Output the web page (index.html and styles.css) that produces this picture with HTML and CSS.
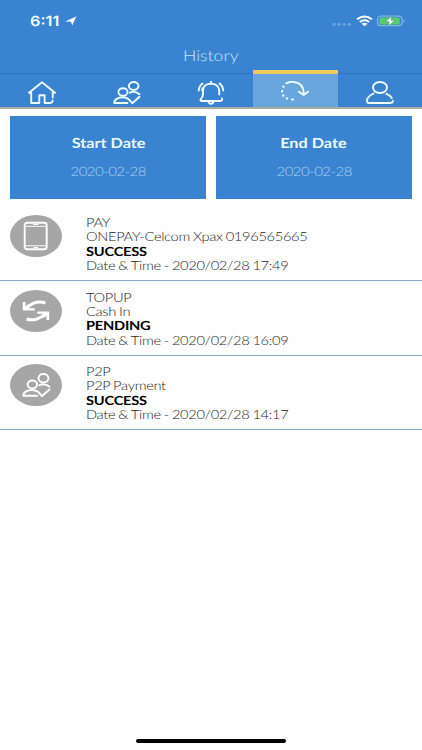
FILE: index.html
```html
<!DOCTYPE html>
<html lang="en">
<head>
<meta charset="utf-8">
<title>History</title>
<link rel="stylesheet" href="styles.css">
</head>
<body>
<svg width="0" height="0" class="defs" aria-hidden="true">
  <symbol id="people" viewBox="0 0 28 24">
    <ellipse cx="20.7" cy="5" rx="4.8" ry="4"/>
    <ellipse cx="10" cy="11" rx="4.6" ry="3.8"/>
    <path d="M14.5 22H1.3C1 18.500 5 16.300 10 16.300Q13 16.300 15.400 18M15.800 18.300L19.300 22.200L26.500 15.800M17 11.700Q21.500 9.400 26.500 13.200"/>
  </symbol>
</svg>
<header class="header">
  <div class="status">
    <span class="time">6:11</span>
    <svg class="location" width="12" height="10" viewBox="0 0 12 10"><path d="M.3 5.400L11.500.3L7.200 9.500L6 5.700Z"/></svg>
    <svg class="signals" width="74" height="14" viewBox="0 0 74 14">
      <g class="dots"><circle cx="3.200" cy="10.300" r="1.600"/><circle cx="8.200" cy="10.300" r="1.600"/><circle cx="13.200" cy="10.300" r="1.600"/><circle cx="18.200" cy="10.300" r="1.600"/></g>
      <path class="wifi" d="M26 5.300Q33.500 -.2 41 5.300M28.800 8Q33.500 4.700 38.200 8"/>
      <path class="white" d="M30.500 9.800Q33.500 7.900 36.500 9.800L33.500 12.200Z"/>
      <rect class="shell" x="46.500" y="2.200" width="24.500" height="9.500" rx="3"/>
      <rect class="charge" x="48.300" y="3.500" width="20.500" height="7" rx="1.500"/>
      <path class="shell" d="M72.600 5.700V8.400"/>
      <path class="bolt" d="M61 1.900L54.300 7.700H58.200L57 12.300L64 6.300H60Z"/>
    </svg>
  </div>
  <h1 class="title"><span class="wide">History</span></h1>
  <nav class="tabs">
    <a class="tab"><svg class="icon" viewBox="0 0 28 24"><path d="M3.200 11.700H1L14 1.200L27 11.700H24.700V16.500M3.200 11.700V22H11.300V14.200H16.600V22H21.500Q24.700 22 24.700 19.500"/></svg></a>
    <a class="tab"><svg class="icon"><use href="#people"/></svg></a>
    <a class="tab"><svg class="icon" viewBox="0 0 28 24"><path d="M22.200 13.500V9.500C22.200 5 18.500 2.800 14 2.800S6 5 6 9.500V13.500Q6 16 3.500 18.400Q3.500 20 5.500 20H23.500Q25.500 20 25 17.500M14 .8V2.800M11.500 20.500Q12 22.800 14 22.800T16.600 20.500M5.500 2.500Q2 5 1.700 9.500M7.300 5.500Q5.500 7 5 9M22.600 2.500Q26 5 26.300 9.500"/></svg></a>
    <a class="tab active"><svg class="icon" viewBox="0 0 28 24"><path d="M5.300 2.300Q10 .2 14 1.200C20 2.200 23 6 22.700 13M17.800 10.700L22.700 14L27 10.700"/><path class="dotted" d="M2.500 5.500L2.400 5.800M1.200 10V10.300M2.200 14.300L2.400 14.600M5.800 17.400L6.100 17.500M11 18.500H12"/></svg></a>
    <a class="tab"><svg class="icon" viewBox="0 0 28 24"><ellipse cx="14" cy="6.500" rx="7" ry="5.500"/><path d="M7.500 12.500C3 14.500 1 17.500 1 20Q1 22 3 22H24Q26.800 22 27 19.800M20.500 12.800Q24.500 14.500 25.800 17"/></svg></a>
  </nav>
</header>
<main>
  <section class="dates">
    <div class="date"><b class="label"><span class="wide">Start Date</span></b><span class="value"><span class="wide">2020-02-28</span></span></div>
    <div class="date"><b class="label"><span class="wide">End Date</span></b><span class="value"><span class="wide">2020-02-28</span></span></div>
  </section>
  <ul class="list">
    <li class="row">
      <div class="badge"><svg width="26" height="30" viewBox="0 0 26 30"><rect x="1.700" y="1.700" width="22" height="26.600" rx="2.500"/><path class="thin" d="M3 5.300H22.500M3 24.800H22.500M10.500 3.500H15M11 26.500H14.500"/></svg></div>
      <div class="details"><p>PAY</p><p>ONEPAY-Celcom Xpax 0196565665</p><p class="state">SUCCESS</p><p>Date &amp; Time - 2020/02/28 17:49</p></div>
    </li>
    <li class="row">
      <div class="badge"><svg width="28" height="22" viewBox="0 0 28 22"><path class="thick" d="M23.500 3C17 .8 10.500 2.500 5.500 7.500M4.500 19C11 21.200 18.500 19 22.700 14"/><path class="heads" d="M.8 2H3.500V6.200L6.500 4L8.300 6L5.800 8.300H12.700V10.500H.8ZM27.200 20H24.500V15.800L21.500 18L19.700 16L22.200 13.700H15.300V11.500H27.200Z"/></svg></div>
      <div class="details"><p>TOPUP</p><p>Cash In</p><p class="state">PENDING</p><p>Date &amp; Time - 2020/02/28 16:09</p></div>
    </li>
    <li class="row">
      <div class="badge"><svg width="29" height="25"><use href="#people"/></svg></div>
      <div class="details"><p>P2P</p><p>P2P Payment</p><p class="state">SUCCESS</p><p>Date &amp; Time - 2020/02/28 14:17</p></div>
    </li>
  </ul>
</main>
<div class="home-bar"></div>
</body>
</html>
```

FILE: styles.css
```css
* { box-sizing: border-box; margin: 0; padding: 0; }
body {
  width: 422px;
  height: 750px;
  display: flex;
  flex-direction: column;
  overflow: hidden;
  background: #fefefe;
  font-family: Lato, sans-serif;
  font-weight: 300;
  text-rendering: geometricPrecision;
}
svg { display: block; fill: none; stroke: #f0fcff; stroke-width: 1.9; stroke-linecap: round; stroke-linejoin: round; }
.defs { position: absolute; }
.wide { display: inline-block; transform: scaleX(1.17); }

.header { height: 109px; flex: none; display: flex; flex-direction: column; background: #3a83d0; border-bottom: 2px solid #a9ada2; }
.status { height: 41px; flex: none; display: flex; align-items: center; padding: 0 17px 0 30px; }
.time { font: 600 14px/16px Inter, sans-serif; color: #f4fcff; transform: scaleX(1.16) translateY(1px); transform-origin: left; width: 35px; }
.location { fill: #f4fcff; stroke: none; }
.signals { margin-left: auto; stroke-linecap: butt; }
.dots { fill: #6aa5e0; stroke: none; }
.wifi { stroke: #fff; stroke-width: 2; }
.white { fill: #fff; stroke: none; }
.shell { stroke: #80b4dd; stroke-width: 1.2; }
.charge { fill: #5acb68; stroke: none; }
.bolt { fill: #fff; stroke: #3f9f86; stroke-width: .7; }
.title { height: 32px; flex: none; text-align: center; font-size: 15.1px; font-weight: 300; line-height: 31px; color: #c3e6f5; }
.tabs { flex: 1; display: grid; grid-template-columns: repeat(5, 1fr); border-top: 1px solid #3274b9; }
.tab { display: flex; justify-content: center; padding-top: 7px; }
.active { margin-top: -4px; border-top: 4px solid #edca5b; background: #68a6dd; }
.icon { width: 28px; height: 24px; }
.dotted { stroke-width: 2.200; }

.dates { display: grid; grid-template-columns: 1fr 1fr; gap: 10px; padding: 7.400px 10.300px 0; }
.date { height: 83px; display: flex; flex-direction: column; align-items: center; gap: 10px; padding-top: 18px; background: #3a83d0; }
.label { font-size: 13.900px; font-weight: 700; line-height: 18px; color: #ecfaff; }
.value { font-size: 12.900px; line-height: 18px; letter-spacing: -.5px; color: #a8d2f2; }

.list { list-style: none; margin-top: 7.300px; }
.row { height: 74.500px; display: flex; gap: 24px; padding: 8.500px 10.300px 0; border-bottom: 1px solid #86a9c4; }
.badge { width: 51.700px; height: 42px; flex: none; display: flex; align-items: center; justify-content: center; border-radius: 50%; background: #a6a6a6; }
.badge svg { stroke: #fff; }
.badge .thin { stroke-width: 1; }
.badge .thick { stroke-width: 3; stroke-linecap: butt; }
.badge .heads { fill: #fff; stroke: none; }
.details { padding-top: 1px; font-size: 12.600px; line-height: 14.300px; letter-spacing: -.29px; word-spacing: -.5px; color: #262626; white-space: nowrap; transform: scaleX(1.165); transform-origin: left; }
.state { font-weight: 700; letter-spacing: -.22px; color: #000; }

.home-bar { width: 150px; height: 4px; margin: auto auto 7px; border-radius: 2px; background: #000; }
```
